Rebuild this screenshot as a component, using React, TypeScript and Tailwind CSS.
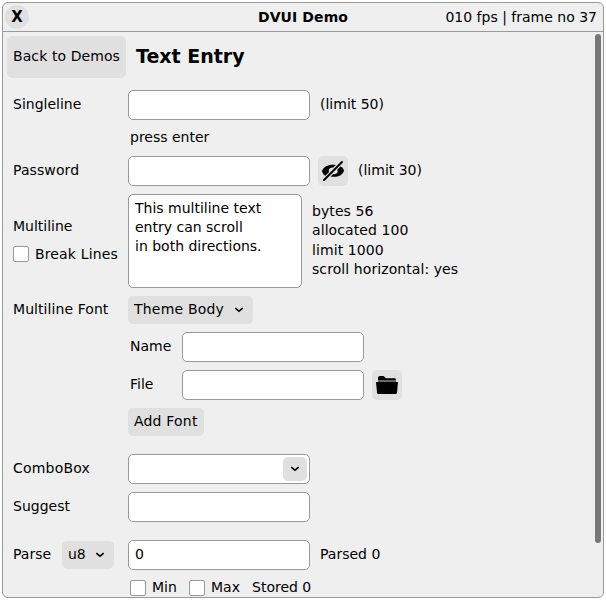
import React from "react";

type Kids = { children?: React.ReactNode; className?: string };

const Label = ({ children, className = "" }: Kids) => (
  <span className={`block whitespace-pre leading-[18px] ${className}`}>{children}</span>
);

const Entry = ({ children, className = "w-[182px]" }: Kids) => (
  <div className={`flex h-[30px] shrink-0 items-center rounded-[5px] border border-[#999] bg-white ${className}`}>
    {children}
  </div>
);

const Button = ({ children, className = "" }: Kids) => (
  <button className={`flex shrink-0 items-center rounded-[5px] bg-[#e0e0e0] text-left ${className}`}>{children}</button>
);

const Row = ({ label, children, className = "" }: Kids & { label?: React.ReactNode }) => (
  <div className={`flex ${className}`}>
    <div className="w-[121px] shrink-0 pl-[6px]">{label}</div>
    {children}
  </div>
);

const Check = ({ className = "" }: Kids) => (
  <span className={`block size-4 shrink-0 rounded-[2px] border border-[#999] bg-white ${className}`} />
);

const Chevron = () => (
  <svg width="10" height="6" viewBox="0 0 10 6" className="shrink-0" fill="none" stroke="#000" strokeWidth="1.5">
    <path d="M1.3 1.2 5 4.2 8.7 1.2" />
  </svg>
);

const EyeOff = () => (
  <svg width="24" height="22" viewBox="0 0 24 22">
    <path d="M1 11C3 6 8 4 15 5L12.500 7.500C8 7 6.500 11 9 13L5.500 16.500C3 15.500 1.500 13.500 1 11Z" />
    <path d="M23 11C21 16 16 17.500 9.500 16.500L12 14C16.500 15 18 11 15.500 9L18.500 5.700C21 6.800 22.500 8.500 23 11Z" />
    <path d="M3 20 21 2" stroke="#e0e0e0" strokeWidth="4" />
    <path d="M3 20 21 2" stroke="#000" strokeWidth="2" strokeLinecap="round" />
  </svg>
);

const Folder = () => (
  <svg width="22" height="20" viewBox="0 0 22 20">
    <path d="M2 5V3Q2 1 4 1H7.500L10 3.200H19Q20 3.200 20 5Z" />
    <path d="M2 5H20V7H2Z" fill="#666" />
    <path d="M0 7H22L21 17.500Q21 19 19.500 19H2.500Q1 19 1 17.500Z" />
  </svg>
);

export default function App() {
  return (
    <div className="h-[600px] w-[606px] overflow-hidden bg-white p-[2px] font-['DejaVu_Sans',sans-serif] text-[14px] text-black">
      <div className="flex h-[596px] w-[602px] flex-col overflow-hidden rounded-[6px] border border-[#999] bg-[#efefef]">
        <header className="grid h-[29px] shrink-0 grid-cols-[1fr_auto_1fr] items-center border-b border-[#999] pl-[2px] pr-[6px]">
          <button className="flex size-6 items-center justify-center rounded-full bg-[#e0e0e0] text-[15px] font-bold leading-none">X</button>
          <span className="pl-[4px] font-bold tracking-[0.1px]">DVUI Demo</span>
          <Label className="text-right">010 fps | frame no 37</Label>
        </header>
        <div className="flex min-h-0 flex-1">
          <main className="w-[592px] shrink-0 pl-[4px] pt-[4px]">
            <div className="flex h-[42px] items-center">
              <Button className="h-[42px] w-[119px] pl-[6px]"><Label className="pb-[2px] tracking-[0.09px]">Back to Demos</Label></Button>
              <h1 className="ml-[10px] pb-[2px] text-[19px] font-bold leading-6">Text Entry</h1>
            </div>
            <Row className="mt-3" label={<Label className="mt-[5px]">Singleline</Label>}>
              <Entry />
              <Label className="ml-[10px] mt-[5px]">(limit 50)</Label>
            </Row>
            <Row className="h-[36px] pt-2"><Label className="ml-[2px]">press enter</Label></Row>
            <Row label={<Label className="mt-[5px] tracking-[0.09px]">Password</Label>}>
              <Entry />
              <Button className="ml-2 size-[30px] justify-center"><EyeOff /></Button>
              <Label className="ml-[10px] mt-[5px]">(limit 30)</Label>
            </Row>
            <Row
              className="mt-2 h-[94px]"
              label={
                <div className="pt-[23px]">
                  <Label>Multiline</Label>
                  <div className="mt-[10px] flex gap-[6px]"><Check className="mt-px" /><Label className="tracking-[0.15px]">Break Lines</Label></div>
                </div>
              }
            >
              <div className="h-[94px] w-[174px] shrink-0 rounded-[5px] border border-[#999] bg-white pl-[6px] pt-[4px]">
                <Label className="leading-[19px]">{"This multiline text\nentry can scroll\nin both directions."}</Label>
              </div>
              <div className="ml-[10px] pt-[8px]">
                <Label className="leading-[19.33px] tracking-[0.08px]">{"bytes 56\nallocated 100\nlimit 1000\nscroll horizontal: yes"}</Label>
              </div>
            </Row>
            <Row className="mt-2" label={<Label className="mt-[4px] tracking-[0.07px]">Multiline Font</Label>}>
              <Button className="h-7 w-[125px] justify-between pl-[6px] pr-[9px]"><Label className="pb-[2px] tracking-[0.2px]">Theme Body</Label><Chevron /></Button>
            </Row>
            <Row className="mt-2">
              <Label className="ml-[2px] mt-[5px] w-[52px]">Name</Label>
              <Entry />
            </Row>
            <Row className="mt-2">
              <Label className="ml-[2px] mt-[5px] w-[52px]">File</Label>
              <Entry />
              <Button className="ml-2 size-[30px] justify-center"><Folder /></Button>
            </Row>
            <Row className="mt-2">
              <Button className="h-7 w-[76px] pl-[6px]"><Label className="pb-[2px] tracking-[0.2px]">Add Font</Label></Button>
            </Row>
            <Row className="mt-[18px]" label={<Label className="mt-[5px] tracking-[0.2px]">ComboBox</Label>}>
              <Entry className="w-[182px] justify-end pr-[2px]">
                <Button className="size-6 justify-center"><Chevron /></Button>
              </Entry>
            </Row>
            <Row className="mt-2" label={<Label className="mt-[5px]">Suggest</Label>}><Entry /></Row>
            <Row
              className="mt-[18px]"
              label={
                <div className="flex pt-px">
                  <Label className="mt-[4px] w-[49px]">Parse</Label>
                  <Button className="h-7 w-[52px] justify-between pl-[6px] pr-[9px]"><Label className="pb-[2px]">u8</Label><Chevron /></Button>
                </div>
              }
            >
              <Entry className="w-[182px] pl-[6px]"><Label className="pb-[2px]">0</Label></Entry>
              <Label className="ml-[10px] mt-[5px]">Parsed 0</Label>
            </Row>
            <Row className="mt-[10px] h-4">
              <div className="ml-[2px] flex">
                <Check /><Label className="-mt-[2px] ml-[6px] w-[37px]">Min</Label>
                <Check /><Label className="-mt-[2px] ml-[6px] w-[41px]">Max</Label>
                <Label className="-mt-[2px]">Stored 0</Label>
              </div>
            </Row>
          </main>
          <div className="mt-[2px] h-[509px] w-[6px] rounded-full bg-[#777]" />
        </div>
      </div>
    </div>
  );
}
